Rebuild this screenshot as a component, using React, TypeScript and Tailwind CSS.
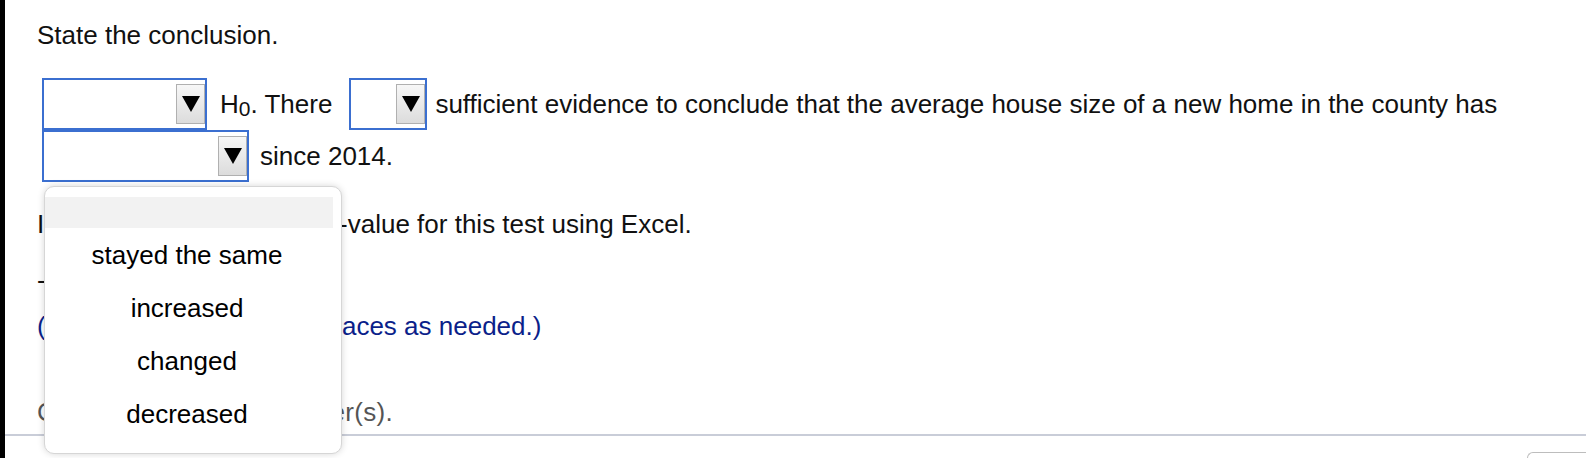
import React from "react";

// Blue-bordered answer dropdown with the grey arrow button on its right edge
const AnswerSelect: React.FC<{ widthClass: string }> = ({ widthClass }) => (
  <div
    className={`flex h-[52px] shrink-0 items-center justify-end border-2 border-[#3b6fd0] bg-white ${widthClass}`}
  >
    <div className="flex h-[40px] w-[29px] items-center justify-center border border-[#b0b0b0] bg-linear-to-b from-[#f7f7f7] to-[#dcdcdc]">
      <svg width="20" height="18" viewBox="0 0 20 18" aria-hidden="true">
        <path d="M1 1h18L10 17z" fill="#000" />
      </svg>
    </div>
  </div>
);

const OPTIONS = ["stayed the same", "increased", "changed", "decreased"];

export default function App() {
  return (
    <div className="flex h-[458px] w-full overflow-hidden bg-white font-['Liberation_Sans',Arial,sans-serif] text-[26px] leading-[30px] text-[#111]">
      {/* left black rail */}
      <div className="w-[5px] shrink-0 bg-black" />

      <div className="relative flex flex-1 flex-col">
        <div className="flex shrink-0 flex-col pl-[32px] pt-[20px]">
          <div className="h-[30px]">State the conclusion.</div>

          {/* sentence with dropdowns */}
          <div className="mt-[28px] flex h-[52px] items-center whitespace-nowrap">
            <div className="ml-[5px]">
              <AnswerSelect widthClass="w-[165px]" />
            </div>
            <span className="ml-[13px]">
              H<sub className="relative top-[3px] text-[21px]">0</sub>. There
            </span>
            <div className="ml-[17px]">
              <AnswerSelect widthClass="w-[78px]" />
            </div>
            <span className="ml-[8px]">
              sufficient evidence to conclude that the average house size of a new home in the county has
            </span>
          </div>
          <div className="flex h-[52px] items-center">
            <div className="ml-[5px]">
              <AnswerSelect widthClass="w-[207px]" />
            </div>
            <span className="ml-[11px]">since 2014.</span>
          </div>

          <div className="mt-[27px] h-[30px]">
            Identify a corresponding P-value for this test using Excel.
          </div>
          <div className="mt-[26px] h-[30px]">-</div>
          <div className="mt-[16px] h-[30px] text-[#0b1f8a]">
            (Round to three decimal places as needed.)
          </div>
          <div className="mt-[56px] h-[30px] tracking-[0.3px] text-[#555]">
            Click to select your answer(s).
          </div>
        </div>

        <div className="mt-[7px] h-[2px] w-full shrink-0 bg-[#c9cdd8]" />
        <div className="mt-[16px] flex shrink-0 justify-end">
          <div className="h-[10px] w-[59px] rounded-tl-[6px] border-l border-t border-[#bdbdbd]" />
        </div>

        {/* open dropdown list */}
        <div className="absolute left-[39px] top-[186px] h-[268px] w-[298px] rounded-[10px] border border-[#d6d6d6] bg-white pt-[10px] shadow-[0_0_7px_rgba(0,0,0,0.16)]">
          <div className="mr-[8px] flex flex-col">
            <div className="h-[31px] bg-[#f2f2f2]" />
            {OPTIONS.map((opt) => (
              <div key={opt} className="flex h-[53px] items-center justify-center pr-[4px] text-black">
                {opt}
              </div>
            ))}
          </div>
        </div>
      </div>
    </div>
  );
}
